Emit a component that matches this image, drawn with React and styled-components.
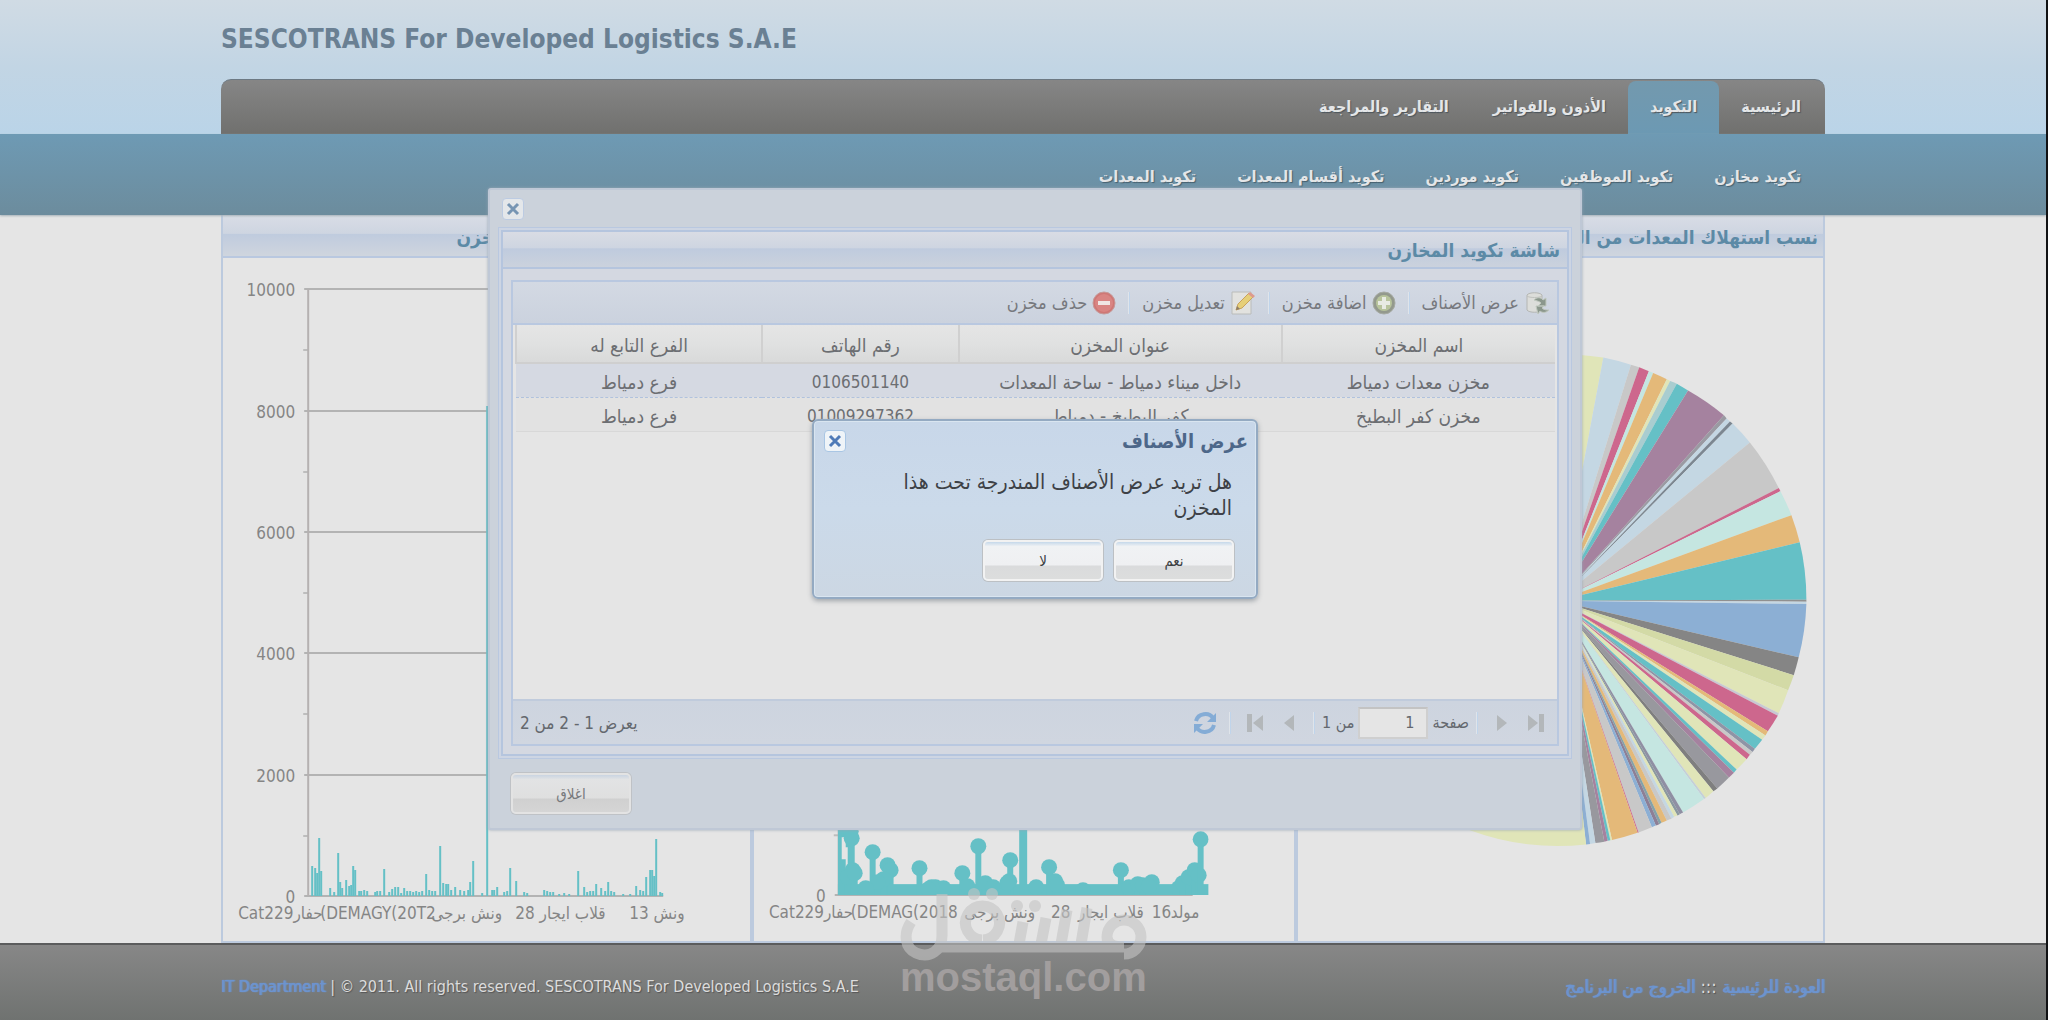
import React from "react";
import styled, { createGlobalStyle, css } from "styled-components";

const GlobalStyle = createGlobalStyle`
  * {
    box-sizing: border-box;
  }
  body {
    margin: 0;
    background: #e5e5e5;
  }
  body, button, input {
    font-family: "DejaVu Sans Condensed", "DejaVu Sans", Tahoma, sans-serif;
  }
`;

const Page = styled.div`
  position: relative;
  display: flex;
  flex-direction: column;
  min-height: 100vh;
  overflow: hidden;
  direction: rtl;
  font-size: 17px;
  border-right: 2px solid #111214;
`;

const Container = styled.div`
  width: 78.4%;
  margin: 0 auto;
  position: relative;
`;

/* ---------- header ---------- */

const Header = styled.header`
  background: linear-gradient(#d0dbe4, #c2d5e4 50%, #bad4e8);
`;

const HeaderInner = styled(Container)`
  display: flex;
  flex-direction: column;
`;

const SiteTitle = styled.h1`
  direction: ltr;
  height: 79px;
  margin: 0;
  font-size: 26px;
  line-height: 78px;
  color: #6a8093;
  white-space: nowrap;
`;

const MainNav = styled.nav`
  display: flex;
  align-items: flex-end;
  height: 55px;
  padding: 0 2px;
  border-top: 1px solid #6d7983;
  border-radius: 10px 10px 0 0;
  background: linear-gradient(#868686, #70706e);
`;

const NavLink = styled.a`
  height: 53px;
  padding: 0 22px;
  font-size: 16px;
  font-weight: bold;
  line-height: 52px;
  color: #e4e6e8;
  text-decoration: none;
  text-shadow: 1px 1px 1px #4c555c;
  white-space: nowrap;

  ${(p) =>
    p.$active &&
    css`
      border-radius: 8px 8px 0 0;
      background: linear-gradient(#7399ae, #6c99b3);
    `}
`;

const SubBar = styled.div`
  height: 81px;
  background: linear-gradient(#6e9ab4, #6c8c9d);
  box-shadow: 0 1px 2px #a5b0b8;
  position: relative;
`;

const SubNav = styled.nav`
  width: 78.4%;
  margin: 0 auto;
  padding: 0 24px;
  display: flex;
  gap: 41px;

  a {
    font-size: 16px;
    font-weight: bold;
    line-height: 86px;
    color: #e4e6e8;
    text-decoration: none;
    text-shadow: 1px 1px 1px #46606f;
    white-space: nowrap;
  }
`;

/* ---------- charts ---------- */

const Panels = styled.main`
  width: 78.4%;
  margin: 0 auto;
  flex: 1;
  display: grid;
  grid-template-columns: 529fr 543fr 531fr;
`;

const Panel = styled.section`
  display: flex;
  flex-direction: column;
  min-width: 0;
  border: 2px solid #bccade;
  border-top: 0;
`;

const PanelTitle = styled.h2`
  height: 43px;
  margin: 0;
  padding: 0 5px;
  overflow: hidden;
  border-bottom: 2px solid #b9c8e0;
  background: linear-gradient(#d9dde6, #ced5e1 45%, #bfcbde 46%, #cfd5de);
  color: #5c8aa6;
  font-size: 19px;
  line-height: 44px;
  white-space: nowrap;
`;

const ChartSvg = styled.svg`
  display: block;
  width: 100%;
  height: 683px;
  direction: ltr;

  text {
    font-size: 17px;
    fill: #858585;
  }
`;

const TEAL = "#65c0c6";

const gridLines = [
  { label: "10000", y: 31 },
  { label: "8000", y: 153 },
  { label: "6000", y: 274 },
  { label: "4000", y: 395 },
  { label: "2000", y: 517 },
  { label: "0", y: 638 },
];

// [x, height] of each consumption bar
const bars = [
  [89, 30], [92, 28], [94, 23], [96, 58], [98, 25], [107, 8], [111, 4], [115, 43],
  [117, 14], [119, 8], [123, 16], [126, 10], [128, 11], [130, 30], [132, 26], [136, 5],
  [138, 5], [141, 6], [144, 5], [152, 4], [154, 5], [157, 5], [161, 27], [166, 4],
  [169, 7], [172, 9], [175, 9], [178, 3], [181, 8], [184, 5], [187, 5], [190, 4],
  [193, 5], [196, 4], [199, 5], [203, 22], [206, 6], [209, 5], [212, 5], [217, 50],
  [220, 13], [223, 12], [225, 12], [228, 6], [232, 9], [237, 6], [241, 5], [245, 6],
  [247, 14], [250, 35], [259, 3], [264, 490], [269, 6], [271, 6], [274, 9], [281, 4],
  [284, 5], [287, 28], [293, 15], [301, 4], [304, 3], [321, 6], [324, 5], [327, 4],
  [330, 4], [336, 2], [341, 3], [346, 2], [355, 25], [361, 9], [364, 4], [367, 5],
  [370, 5], [373, 12], [378, 8], [382, 5], [385, 14], [388, 5], [391, 4], [400, 2],
  [407, 2], [413, 10], [417, 6], [420, 5], [423, 19], [427, 26], [429, 26], [431, 20],
  [433, 57], [437, 4], [439, 3],
];

// [x, height] of each lollipop marker in the middle chart
const markers = [
  [97, 64], [98, 57], [99, 25], [94, 18], [101, 22], [119, 43], [134, 30], [137, 25],
  [130, 16], [124, 13], [166, 27], [209, 22], [225, 49], [257, 35], [256, 14], [254, 12],
  [232, 12], [240, 8], [214, 9], [182, 8], [190, 7], [178, 8], [175, 6], [112, 7],
  [283, 8], [296, 28], [302, 14], [304, 10], [330, 5], [368, 25], [376, 8], [385, 11],
  [390, 10], [399, 13], [396, 9], [426, 7], [430, 12], [436, 18], [442, 25], [446, 20],
  [448, 56],
];

const ScaleAxis = () => (
  <g>
    {gridLines.map(({ label, y }) => (
      <g key={label}>
        <line x1="81" x2="440" y1={y} y2={y} stroke="#b3b3b3" strokeWidth="2" />
        {y < 638 && (
          <line x1="80" x2="85" y1={y + 61} y2={y + 61} stroke="#bdbdbd" strokeWidth="2" />
        )}
        <text x="72" y={y + 7} textAnchor="end">
          {label}
        </text>
      </g>
    ))}
    <line x1="85" x2="85" y1="31" y2="638" stroke="#b5b1b1" strokeWidth="2" />
  </g>
);

const BarChart = () => (
  <ChartSvg viewBox="0 0 527 683">
    <ScaleAxis />
    {bars.map(([x, h]) => (
      <rect key={x} x={x - 1} y={638 - h} width="2" height={h} fill={TEAL} />
    ))}
    <text x="15" y="661">Cat229حفار</text>
    <text x="97" y="661">(DEMAGY(20T2</text>
    <text x="208" y="661">ونش برجى</text>
    <text x="292" y="661">28 قلاب ايجار</text>
    <text x="406" y="661">13 ونش</text>
  </ChartSvg>
);

const MarkerChart = () => (
  <ChartSvg viewBox="0 0 541 683">
    <defs>
      <clipPath id="plot">
        <rect x="84" y="0" width="372" height="638" />
      </clipPath>
    </defs>
    <ScaleAxis />
    <g clipPath="url(#plot)" fill={TEAL}>
      <rect x="84" y="627" width="372" height="12" />
      <path d="M84 560h14v30h-6v-10h-4v22h4v36h-8z" />
      <rect x="266" y="150" width="8" height="488" />
      {markers.map(([x, h]) => (
        <g key={`${x}-${h}`}>
          <rect x={x - 3} y={638 - h} width="6" height={h} />
          <circle cx={x} cy={638 - h} r="8" />
        </g>
      ))}
    </g>
    <text x="15" y="661">Cat229حفار</text>
    <text x="97" y="661">(DEMAG(2018</text>
    <text x="211" y="661">ونش برجى</text>
    <text x="298" y="661">28</text>
    <text x="325" y="661">قلاب ايجار</text>
    <text x="399" y="661">16</text>
    <text x="418" y="661">مولد</text>
  </ChartSvg>
);

// rim point where each slice ends, clockwise from the top
const slices = [
  [487, 107, "#e0e5b8"], [570, 128, "#c4d7e3"], [595, 135, "#c8c8c8"], [624, 147, "#cd678d"],
  [637, 152, "#c5e6e1"], [678, 170, "#e4b979"], [688, 175, "#e0e5b8"], [708, 183, "#a9cdd0"],
  [742, 203, "#65c0c6"], [850, 275, "#a5829f"], [858, 284, "#9a9aa2"], [868, 293, "#c4d7e3"],
  [876, 299, "#7c8791"], [928, 354, "#c4d7e3"], [1015, 487, "#c8c8c8"], [1020, 496, "#cd678d"],
  [1053, 566, "#c5e6e1"], [1078, 645, "#e4b979"], [1098, 812, "#65c0c6"], [1098, 818, "#909090"],
  [1098, 825, "#c4d7e3"], [1075, 980, "#8cafd4"], [1060, 1032, "#858585"], [1043, 1076, "#d3daa6"],
  [1015, 1143, "#e0e5b8"], [1012, 1150, "#c8c8d2"], [982, 1195, "#cd678d"], [975, 1208, "#e4b979"],
  [965, 1220, "#e0e5b8"], [943, 1246, "#65c0c6"], [936, 1256, "#8f94a6"], [928, 1264, "#c8c8c8"],
  [918, 1277, "#cd678d"], [888, 1307, "#e0e5b8"], [880, 1316, "#65c0c6"], [865, 1330, "#a5829f"],
  [830, 1362, "#98989e"], [818, 1370, "#7f7f7f"], [795, 1390, "#e0e5b8"], [790, 1393, "#c4cfd8"],
  [727, 1432, "#c5e6e1"], [717, 1437, "#8f8fa3"], [710, 1441, "#8a98a0"], [700, 1444, "#e0e5b8"],
  [692, 1450, "#c4d7e3"], [678, 1455, "#c8c8c8"], [662, 1462, "#e4b979"], [655, 1466, "#84a2a8"],
  [645, 1470, "#8d7f95"], [633, 1475, "#8cafd4"], [593, 1490, "#c8c8c8"], [590, 1491, "#cd678d"],
  [513, 1512, "#e4b979"], [508, 1513, "#e0e5b8"], [500, 1514, "#65c0c6"], [490, 1517, "#a5829f"],
  [463, 1521, "#98989e"], [447, 1524, "#c4d7e3"], [435, 1525, "#8cafd4"], [-200, 1300, "#e0e5b8"],
  [-398, 815, "#e4b979"], [350, 98, "#65c0c6"],
];

const PieChart = () => (
  <ChartSvg viewBox="0 0 527 683">
    <g transform="translate(144 62) scale(0.3333 0.3444)">
      {slices.map(([x, y, fill], i) => {
        const [px, py] = i ? slices[i - 1] : [350, 98];
        return (
          <path
            key={i}
            d={`M350 815L${px} ${py}A748 717 0 0 1 ${x} ${y}Z`}
            fill={fill}
          />
        );
      })}
    </g>
  </ChartSvg>
);

/* ---------- store window ---------- */

const Layer = styled.div`
  position: absolute;
  inset: 0;
  padding: ${(p) => p.$top}px 0 0 24px;
  display: flex;
  justify-content: center;
  align-items: flex-start;
`;

const Window = styled.section`
  width: 1094px;
  padding: 0 10px;
  border: 2px solid #bfc8d6;
  border-radius: 3px;
  background: #cbd2db;
  box-shadow: 0 0 3px #9aa7b5;
`;

const CloseButton = styled.button`
  width: 22px;
  height: 22px;
  padding: 0;
  display: flex;
  align-items: center;
  justify-content: center;
  border: 1px solid ${(p) => (p.$strong ? "#a9c6e4" : "#bccbe2")};
  border-radius: 4px;
  background: ${(p) => (p.$strong ? "#eff4f8" : "#e4e7ea")};
  color: ${(p) => (p.$strong ? "#4f7bb8" : "#7795b3")};
`;

const WindowHead = styled.header`
  display: flex;
  justify-content: flex-end;
  align-items: center;
  height: 37px;
  padding: 0 2px;
`;

const Frame = styled.div`
  margin: 0 -2px;
  padding: 2px;
  border: 1px solid #b9c8e0;
  background: #cdd5e3;
`;

const Card = styled.div`
  border: 2px solid #b5c5de;
  background: #d4d8e1;
`;

const CardTitle = styled.h2`
  height: 37px;
  margin: 0;
  padding: 0 7px;
  border-bottom: 2px solid #b5c5de;
  background: linear-gradient(#d9dce4, #ced5e1 45%, #bfcbde 48%, #cbd2dd);
  color: #5c8aa6;
  font-size: 19px;
  line-height: 36px;
`;

const Grid = styled.div`
  margin: 11px 8px 8px;
  border: 2px solid #b9c8e0;
  background: #e5e5e5;
`;

const Toolbar = styled.div`
  display: flex;
  align-items: center;
  gap: 12px;
  height: 43px;
  padding: 0 7px;
  border-bottom: 2px solid #b9c8e0;
  background: linear-gradient(#d3d9e3, #cbd2de);
`;

const ToolButton = styled.button`
  display: flex;
  align-items: center;
  gap: 5px;
  padding: 0;
  border: 0;
  background: none;
  color: #77797e;
  font-size: 18px;
  line-height: 24px;
`;

const Separator = styled.span`
  width: 2px;
  height: 22px;
  background: #c0d4ea;
  border-left: 1px solid #dfe4ea;
`;

const GridBody = styled.div`
  height: 374px;
  padding: 0 2px;
`;

const StoreTable = styled.table`
  width: 100%;
  table-layout: fixed;
  border-collapse: collapse;
  text-align: center;
  color: #6c6e72;

  th {
    height: 38px;
    padding: 3px 0 0;
    font-size: 19px;
    font-weight: normal;
    line-height: 24px;
    border-left: 2px solid #d0d0d0;
    border-bottom: 2px solid #cfcfcf;
    background: linear-gradient(#e5e5e5, #e0e1e1 50%, #d9dada);
  }

  td {
    height: 34px;
    padding: 3px 0 0;
    font-size: 19px;
    line-height: 24px;
    white-space: nowrap;
  }
`;

const StoreRow = styled.tr`
  background: ${(p) => (p.$selected ? "#d5d9e2" : "#e2e2e2")};
  td {
    border-bottom: ${(p) => (p.$selected ? "1px dashed #b0c2de" : "1px solid #d8d8d8")};
  }
  td.phone {
    font-size: 17px;
  }
`;

const Pager = styled.footer`
  display: flex;
  align-items: center;
  height: 45px;
  padding: 0 4px;
  border-top: 2px solid #c0cbdc;
  background: linear-gradient(#cdd4df, #d0d6e0);
  color: #64686e;
  font-size: 16px;
`;

const PagerButton = styled.button`
  width: 34px;
  height: 30px;
  padding: 0;
  display: flex;
  align-items: center;
  justify-content: center;
  border: 0;
  background: none;
  color: #b3b7ba;
`;

const PagerSeparator = styled(Separator)`
  margin: 0 7px;
`;

const PageInput = styled.input`
  width: 70px;
  height: 32px;
  margin: 0 4px;
  padding: 0 12px;
  border: 2px solid #cfcfcf;
  border-top-color: #c3c3c3;
  background: #e5e5e5;
  color: #64686e;
  font-size: 16px;
`;

const PagerStatus = styled.span`
  margin-right: auto;
  padding-left: 3px;
  font-size: 17px;
`;

const WindowFoot = styled.footer`
  display: flex;
  justify-content: flex-end;
  padding: 14px 11px;
`;

const PushButton = styled.button`
  width: 120px;
  height: 41px;
  padding: 0;
  border: 2px solid ${(p) => (p.$bright ? "#f2f2f2" : "#e3e3e3")};
  border-radius: 5px;
  box-shadow: 0 0 0 1px ${(p) => (p.$bright ? "#bcc0c4" : "#bfc2c6")};
  background: ${(p) =>
    p.$bright
      ? "linear-gradient(#c5d8ea, #f0f2f4 12%, #eff0f2 62%, #dadbdc 65%, #dcdddd)"
      : "linear-gradient(#c9d4e2, #e2e3e4 12%, #dfdfdf 62%, #d0d0d0 65%, #d5d5d5)"};
  background-clip: padding-box;
  color: ${(p) => (p.$bright ? "#3c3f43" : "#77797c")};
  font-size: 15px;
  line-height: 30px;
`;

/* ---------- confirm dialog ---------- */

const Dialog = styled.div`
  width: 446px;
  padding: 6px 8px 16px 10px;
  border: 2px solid #94aac2;
  border-radius: 6px;
  background: linear-gradient(#c8d7e9, #cbdaea 50%, #ccd7e3);
  box-shadow: 0 2px 5px #9fa4a9, inset 0 0 0 1px #d9e5f0;
`;

const DialogHead = styled.header`
  display: flex;
  justify-content: space-between;
  align-items: center;
  height: 28px;

  h3 {
    margin: 0;
    color: #4d6789;
    font-size: 20px;
  }
`;

const DialogText = styled.p`
  width: 350px;
  margin: 14px 16px 19px;
  color: #3d4146;
  font-size: 21px;
  line-height: 26px;
`;

const DialogActions = styled.div`
  display: flex;
  gap: 11px;
  padding: 0 14px;
`;

/* ---------- page footer ---------- */

const Footer = styled.footer`
  height: 78px;
  border-top: 2px solid #5b5c5d;
  background: linear-gradient(#878787, #6f7270);
`;

const FooterInner = styled(Container)`
  display: flex;
  justify-content: space-between;
  line-height: 84px;
  font-size: 16px;
  color: #dcdcdc;
  text-shadow: 1px 1px 1px #555;
  white-space: nowrap;

  a {
    color: #6c94cf;
    text-decoration: none;
    text-shadow: 0 0 1px #6c94cf, 1px 0 1px #6c94cf;
  }
`;

const FooterLinks = styled.span`
  font-size: 18px;
`;

const Watermark = styled.svg`
  position: absolute;
  top: 884px;
  left: 898px;
  width: 252px;
  height: 120px;
  direction: ltr;
  pointer-events: none;

  text {
    font-family: "Liberation Sans", Arial, sans-serif;
    font-size: 40px;
    font-weight: bold;
    fill: #a29e9e;
  }
`;

const Cross = () => (
  <svg width="14" height="14" viewBox="0 0 14 14" stroke="currentColor" strokeWidth="3">
    <path d="M2 2l10 10M12 2L2 12" />
  </svg>
);

const ItemsIcon = () => (
  <svg width="26" height="24" viewBox="0 0 26 24">
    <path d="M3 4c2-3 13-3 15 0v15c-2 3-13 3-15 0z" fill="#dcddda" stroke="#b4b6b3" />
    <path d="M3 5c2 2 13 2 15 0" fill="none" stroke="#bfc1be" />
    <path
      d="M10 9c3-3 7-3 9 0l3-2v8h-8l3-3c-2-2-4-2-7-3zM25 19c-3 3-7 3-9 1l-2 3-2-8h8l-2 2c2 2 4 2 7 2z"
      fill="#8b978c"
      stroke="#c0c8bf"
    />
  </svg>
);

const AddIcon = () => (
  <svg width="24" height="24" viewBox="0 0 24 24">
    <circle cx="12" cy="12" r="11" fill="#93998d" stroke="#a6aaa3" />
    <circle cx="12" cy="12" r="8" fill="#b8c49c" />
    <path d="M12 6v12M6 12h12" stroke="#e8ebe2" strokeWidth="4" />
  </svg>
);

const EditIcon = () => (
  <svg width="26" height="24" viewBox="0 0 26 24">
    <path d="M2 1h19v22H2z" fill="#e2e2df" stroke="#babcba" />
    <path d="M6 19l2-6L19 2l4 4-11 11z" fill="#e6cf78" stroke="#c8a25c" />
    <path d="M18 3l2-2 5 4-2 2z" fill="#dd9a8d" />
    <path d="M6 19l1-4 3 3z" fill="#8e7e68" />
  </svg>
);

const DeleteIcon = () => (
  <svg width="24" height="24" viewBox="0 0 24 24">
    <circle cx="12" cy="12" r="11" fill="#cf7775" stroke="#c69a99" />
    <circle cx="12" cy="12" r="9" fill="#d98583" />
    <path d="M6 12h12" stroke="#f0e6e4" strokeWidth="4" />
  </svg>
);

// arrow head pointing right; `end` adds the first/last page bar
const PageArrow = ({ end, flip }) => (
  <svg width="20" height="20" viewBox="0 0 20 20" fill="currentColor">
    <g transform={flip ? "translate(20 0) scale(-1 1)" : undefined}>
      <path d={end ? "M2 2l10 8-10 8z" : "M5 2l10 8-10 8z"} />
      {end && <path d="M13 1h5v18h-5z" />}
    </g>
  </svg>
);

const RefreshIcon = () => (
  <svg width="24" height="24" viewBox="0 0 24 24" fill="none" stroke="#84acd6" strokeWidth="4">
    <path d="M3 10c2-8 13-9 17-3M21 14c-2 8-13 9-17 3" />
    <path d="M23 2v9h-9zM1 22v-9h9z" fill="#84acd6" stroke="none" />
  </svg>
);

const mainLinks = [
  { label: "الرئيسية" },
  { label: "التكويد", active: true },
  { label: "الأذون والفواتير" },
  { label: "التقارير والمراجعة" },
];

const subLinks = [
  "تكويد مخازن",
  "تكويد الموظفين",
  "تكويد موردين",
  "تكويد أقسام المعدات",
  "تكويد المعدات",
];

const tools = [
  { label: "عرض الأصناف", Icon: ItemsIcon },
  { label: "اضافة مخزن", Icon: AddIcon },
  { label: "تعديل مخزن", Icon: EditIcon },
  { label: "حذف مخزن", Icon: DeleteIcon },
];

const stores = [
  {
    name: "مخزن معدات دمياط",
    address: "داخل ميناء دمياط - ساحة المعدات",
    phone: "0106501140",
    branch: "فرع دمياط",
  },
  {
    name: "مخزن كفر البطيخ",
    address: "كفر البطيخ - دمياط",
    phone: "01009297362",
    branch: "فرع دمياط",
  },
];

const StoreWindow = () => (
  <Window>
    <WindowHead>
      <CloseButton aria-label="اغلاق">
        <Cross />
      </CloseButton>
    </WindowHead>
    <Frame>
      <Card>
        <CardTitle>شاشة تكويد المخازن</CardTitle>
        <Grid>
          <Toolbar>
            {tools.map(({ label, Icon }, i) => (
              <React.Fragment key={label}>
                {i > 0 && <Separator />}
                <ToolButton>
                  <Icon />
                  {label}
                </ToolButton>
              </React.Fragment>
            ))}
          </Toolbar>
          <GridBody>
            <StoreTable>
              <colgroup>
                <col style={{ width: "26.3%" }} />
                <col style={{ width: "31.1%" }} />
                <col style={{ width: "18.9%" }} />
                <col />
              </colgroup>
              <thead>
                <tr>
                  <th>اسم المخزن</th>
                  <th>عنوان المخزن</th>
                  <th>رقم الهاتف</th>
                  <th>الفرع التابع له</th>
                </tr>
              </thead>
              <tbody>
                {stores.map((s, i) => (
                  <StoreRow key={s.phone} $selected={i === 0}>
                    <td>{s.name}</td>
                    <td>{s.address}</td>
                    <td className="phone">{s.phone}</td>
                    <td>{s.branch}</td>
                  </StoreRow>
                ))}
              </tbody>
            </StoreTable>
          </GridBody>
          <Pager>
            <PagerButton aria-label="last">
              <PageArrow end />
            </PagerButton>
            <PagerButton aria-label="next">
              <PageArrow />
            </PagerButton>
            <PagerSeparator />
            <label htmlFor="page">صفحة</label>
            <PageInput id="page" defaultValue="1" />
            <span>من 1</span>
            <PagerSeparator />
            <PagerButton aria-label="previous">
              <PageArrow flip />
            </PagerButton>
            <PagerButton aria-label="first">
              <PageArrow end flip />
            </PagerButton>
            <PagerSeparator />
            <PagerButton aria-label="refresh">
              <RefreshIcon />
            </PagerButton>
            <PagerStatus>يعرض 1 - 2 من 2</PagerStatus>
          </Pager>
        </Grid>
      </Card>
    </Frame>
    <WindowFoot>
      <PushButton>اغلاق</PushButton>
    </WindowFoot>
  </Window>
);

const ConfirmDialog = () => (
  <Dialog role="dialog" aria-labelledby="confirm-title">
    <DialogHead>
      <h3 id="confirm-title">عرض الأصناف</h3>
      <CloseButton $strong aria-label="اغلاق">
        <Cross />
      </CloseButton>
    </DialogHead>
    <DialogText>هل تريد عرض الأصناف المندرجة تحت هذا المخزن</DialogText>
    <DialogActions>
      <PushButton $bright>نعم</PushButton>
      <PushButton $bright>لا</PushButton>
    </DialogActions>
  </Dialog>
);

const chartTitle = "نسب استهلاك المعدات من المخزن";

export default function App() {
  return (
    <Page>
      <GlobalStyle />
      <Header>
        <HeaderInner>
          <SiteTitle>SESCOTRANS For Developed Logistics S.A.E</SiteTitle>
          <MainNav>
            {mainLinks.map(({ label, active }) => (
              <NavLink key={label} href="#" $active={active}>
                {label}
              </NavLink>
            ))}
          </MainNav>
        </HeaderInner>
      </Header>
      <SubBar>
        <SubNav>
          {subLinks.map((label) => (
            <a key={label} href="#">
              {label}
            </a>
          ))}
        </SubNav>
      </SubBar>
      <Panels>
        {[PieChart, MarkerChart, BarChart].map((Chart, i) => (
          <Panel key={i}>
            <PanelTitle>{chartTitle}</PanelTitle>
            <Chart />
          </Panel>
        ))}
      </Panels>
      <Footer>
        <FooterInner>
          <FooterLinks>
            <a href="#">العودة للرئيسية</a> ::: <a href="#">الخروج من البرنامج</a>
          </FooterLinks>
          <span dir="ltr">
            <a href="#">IT Department</a> | © 2011. All rights reserved. SESCOTRANS For
            Developed Logistics S.A.E
          </span>
        </FooterInner>
      </Footer>
      <Layer $top={188}>
        <StoreWindow />
      </Layer>
      <Layer $top={419}>
        <ConfirmDialog />
      </Layer>
      <Watermark viewBox="0 0 252 120">
        <g fill="none" stroke="#c3c3c3" strokeOpacity="0.6" strokeWidth="11">
          <path d="M13 38C5 50 7 64 18 69C32 75 44 66 44 52V10M226 70A17 17 0 1 0 209 53M209 53Q209 63 226 63H44M85 56A17 17 0 1 0 84 56M121 60l4-22M143 60l5-26M163 60l6-34M183 60l6-36" />
        </g>
        <g fill="#c3c3c3" fillOpacity="0.6">
          <circle cx="76" cy="10" r="6" />
          <circle cx="94" cy="10" r="6" />
          <circle cx="119" cy="22" r="6" />
          <circle cx="137" cy="22" r="6" />
        </g>
        <text x="2" y="107">mostaql.com</text>
      </Watermark>
    </Page>
  );
}
